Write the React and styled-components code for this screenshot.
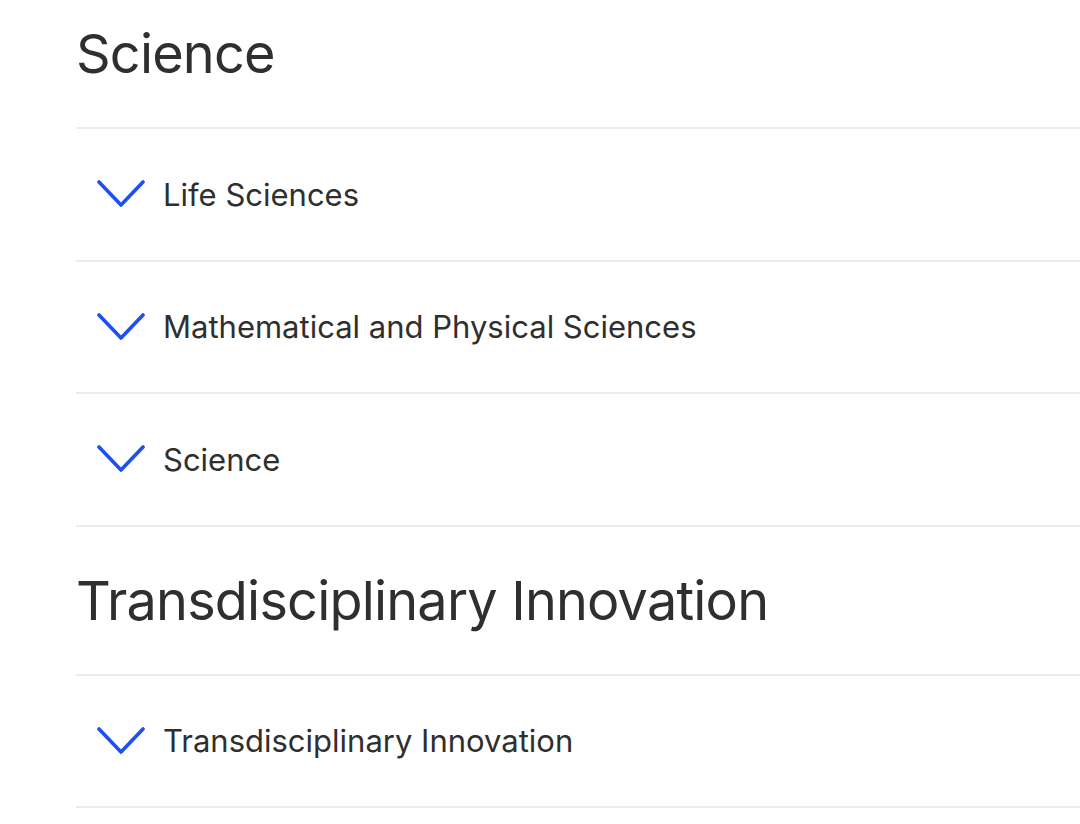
import React from 'react';
import styled, { createGlobalStyle } from 'styled-components';

const sections = [
  {
    title: 'Science',
    items: ['Life Sciences', 'Mathematical and Physical Sciences', 'Science'],
  },
  {
    title: 'Transdisciplinary Innovation',
    items: ['Transdisciplinary Innovation'],
  },
];

function Chevron() {
  return (
    <ChevronSvg viewBox="0 0 48 28" aria-hidden="true">
      <polyline points="2,2 24,25 46,2" />
    </ChevronSvg>
  );
}

export default function App() {
  return (
    <>
      <GlobalStyle />
      <Page>
        {sections.map((section) => (
          <Section key={section.title}>
            <Heading>{section.title}</Heading>
            {section.items.map((item) => (
              <Row key={item}>
                <Chevron />
                <RowLabel>{item}</RowLabel>
              </Row>
            ))}
          </Section>
        ))}
      </Page>
    </>
  );
}

const GlobalStyle = createGlobalStyle`
  body {
    margin: 0;
    background: #ffffff;
    font-family: Inter, "Noto Sans", sans-serif;
    color: #2f2f2f;
    overflow: hidden;
  }
`;

const Page = styled.main`
  margin-top: -20px;
  padding-left: 76px;
`;

const Section = styled.section`
  display: flex;
  flex-direction: column;
`;

const Heading = styled.h2`
  margin: 0;
  height: 149px;
  display: flex;
  align-items: center;
  font-size: 54px;
  font-weight: 400;
  letter-spacing: -0.8px;
  border-bottom: 2px solid #ececec;
  box-sizing: border-box;
`;

const Row = styled.div`
  height: 132.5px;
  display: flex;
  align-items: center;
  gap: 18px;
  padding-left: 21px;
  border-bottom: 2px solid #ececec;
  box-sizing: border-box;
`;

const ChevronSvg = styled.svg`
  width: 48px;
  height: 28px;
  flex-shrink: 0;
  fill: none;
  stroke: #1d4ff2;
  stroke-width: 3.6;
  stroke-linecap: round;
  stroke-linejoin: round;
`;

const RowLabel = styled.span`
  font-size: 31px;
  font-weight: 400;
  color: #2f2f2f;
`;
